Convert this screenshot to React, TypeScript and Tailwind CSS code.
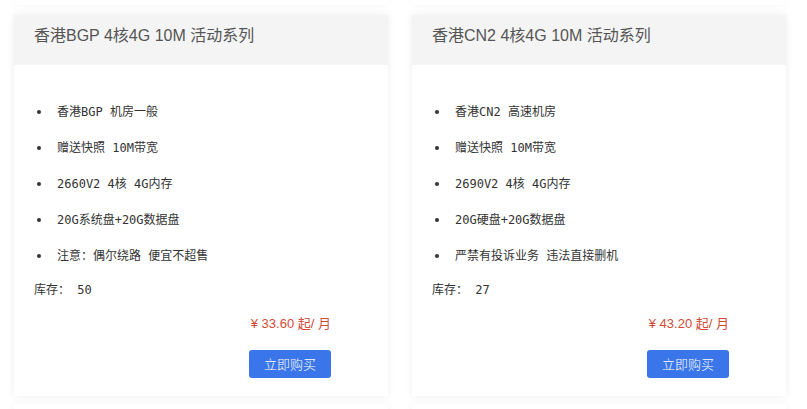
import React from "react";

const mono = "font-['DejaVu_Sans_Mono','Noto_Sans_CJK_SC',monospace]";

const cards = [
  {
    title: "香港BGP 4核4G 10M 活动系列",
    items: [
      "香港BGP 机房一般",
      "赠送快照 10M带宽",
      "2660V2 4核 4G内存",
      "20G系统盘+20G数据盘",
      "注意：偶尔绕路 便宜不超售",
    ],
    stock: "50",
    price: "¥ 33.60 起/ 月",
  },
  {
    title: "香港CN2 4核4G 10M 活动系列",
    items: [
      "香港CN2 高速机房",
      "赠送快照 10M带宽",
      "2690V2 4核 4G内存",
      "20G硬盘+20G数据盘",
      "严禁有投诉业务 违法直接删机",
    ],
    stock: "27",
    price: "¥ 43.20 起/ 月",
  },
];

function Card({ c }: { c: (typeof cards)[number] }) {
  return (
    <div className="bg-white shadow-[0_0_8px_rgba(0,0,0,0.07)] h-[381px] flex flex-col">
      <div className="h-[50px] bg-[#f4f4f4] pl-[20px] pt-[11px] leading-[20px] text-[16px] text-[#555] font-['Liberation_Sans','Noto_Sans_CJK_SC',sans-serif] whitespace-pre">
        {c.title}
      </div>
      <ul className={`pt-[29px] pl-[22px] text-[12px] text-[#333] ${mono}`}>
        {c.items.map((it) => (
          <li key={it} className="h-[36px] flex items-center">
            <span className="w-[4px] h-[4px] rounded-full bg-[#333] ml-[1px] mr-[16px]" />
            <span className="whitespace-pre">{it}</span>
          </li>
        ))}
      </ul>
      <div className={`pl-[20px] h-[32px] flex items-center text-[12px] text-[#333] ${mono} whitespace-pre`}>
        {"库存： " + c.stock}
      </div>
      <div className="flex flex-col items-end pr-[57px] mt-[5px]">
        <div className="h-[26px] flex items-center text-[13px] text-[#d14a36] font-['Liberation_Sans','Noto_Sans_CJK_SC',sans-serif] whitespace-pre">
          {c.price}
        </div>
        <button className="mt-[13px] w-[82px] h-[28px] rounded-[3px] bg-[#3a76e9] text-white text-[13px] font-['Noto_Sans_CJK_SC',sans-serif] font-light">
          立即购买
        </button>
      </div>
    </div>
  );
}

export default function App() {
  return (
    <div className="w-[807px] h-[409px] overflow-hidden bg-white">
      <div className="grid grid-cols-[374px_374px] gap-x-[24px] pl-[14px]">
        <div className="h-[5px] bg-white shadow-[0_0_8px_rgba(0,0,0,0.05)]" />
        <div className="h-[5px] bg-white shadow-[0_0_8px_rgba(0,0,0,0.05)]" />
        <div className="mt-[10px]">
          <Card c={cards[0]} />
        </div>
        <div className="mt-[10px]">
          <Card c={cards[1]} />
        </div>
        <div className="mt-[8px] h-[40px] bg-white shadow-[0_0_8px_rgba(0,0,0,0.05)]" />
        <div className="mt-[8px] h-[40px] bg-white shadow-[0_0_8px_rgba(0,0,0,0.05)]" />
      </div>
    </div>
  );
}
